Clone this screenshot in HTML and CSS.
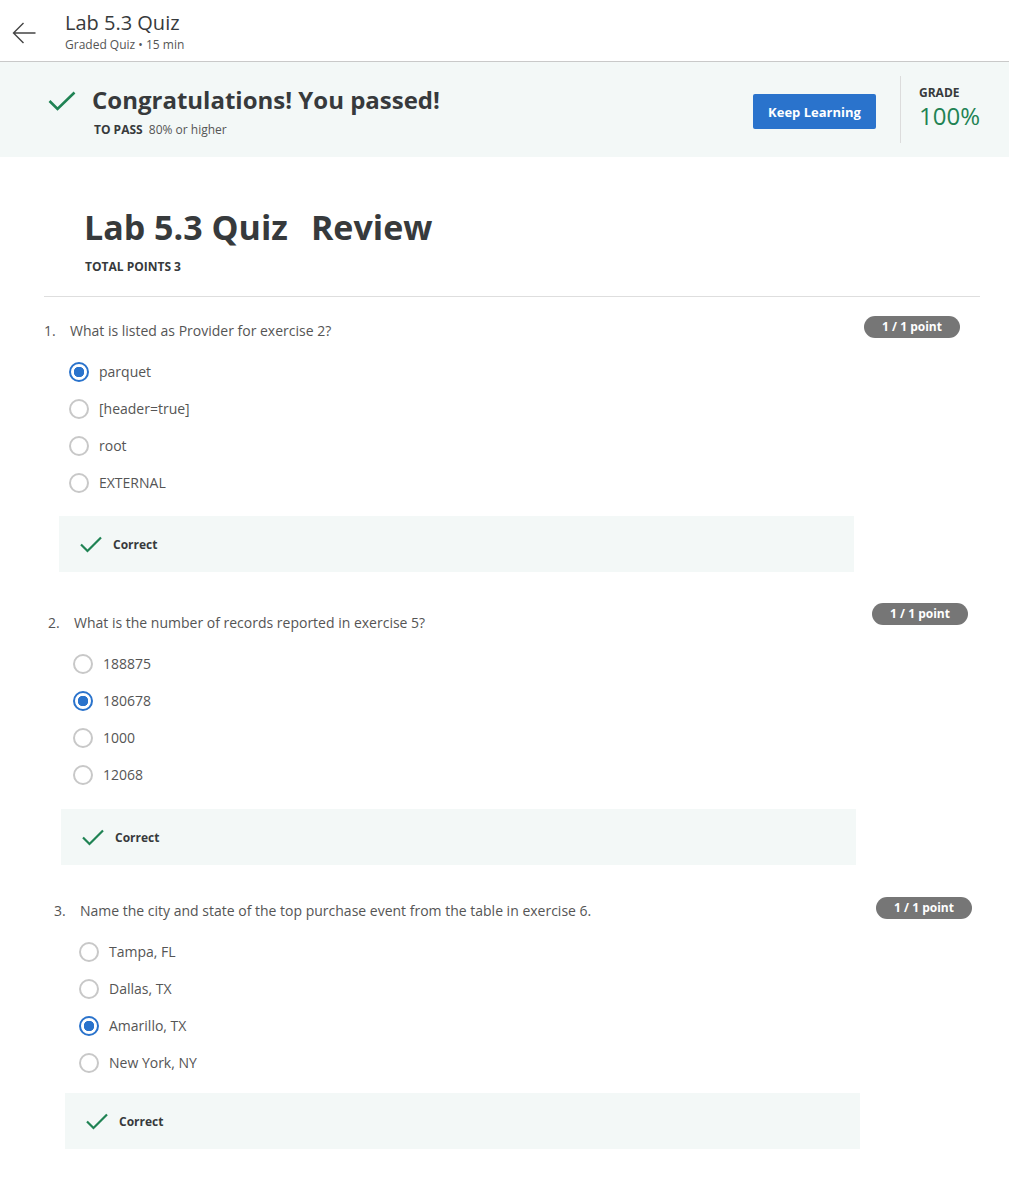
FILE: index.html
```html
<!DOCTYPE html>
<html lang="en">
<head>
<meta charset="utf-8">
<title>Lab 5.3 Quiz</title>
<link rel="stylesheet" href="styles.css">
</head>
<body>
<header class="topbar">
  <div class="back">
    <svg width="24" height="22" viewBox="0 0 24 22" aria-hidden="true"><path d="M23.5 11 H1.5 M11.5 1 L1.5 11 L11.5 21" fill="none" stroke="#444" stroke-width="1.4"/></svg>
  </div>
  <div class="topbar-titles">
    <div class="topbar-title">Lab 5.3 Quiz</div>
    <div class="topbar-sub">Graded Quiz • 15 min</div>
  </div>
</header>

<section class="banner">
  <div class="banner-left">
    <div class="banner-head">
      <svg class="banner-check" width="28" height="20" viewBox="0 0 28 20" aria-hidden="true"><polyline points="1.5,10 9.5,18 26.5,1.5" fill="none" stroke="#1f8354" stroke-width="2.6"/></svg>
      <h1 class="banner-title">Congratulations! You passed!</h1>
    </div>
    <div class="banner-sub"><span class="label">TO PASS</span> 80% or higher</div>
  </div>
  <button class="btn-primary">Keep Learning</button>
  <div class="divider"></div>
  <div class="grade">
    <div class="label">GRADE</div>
    <div class="grade-value">100%</div>
  </div>
</section>

<main class="main">
  <h2 class="page-title"><span>Lab 5.3 Quiz</span><span class="review">Review</span></h2>
  <div class="total">TOTAL POINTS 3</div>
  <hr class="rule">

  <div class="question q1">
    <div class="q-top">
      <div class="q-head"><span class="q-num">1.</span><span>What is listed as Provider for exercise 2?</span></div>
      <span class="badge">1 / 1 point</span>
    </div>
    <div class="options">
      <div class="option"><span class="radio checked"></span>parquet</div>
      <div class="option"><span class="radio"></span>[header=true]</div>
      <div class="option"><span class="radio"></span>root</div>
      <div class="option"><span class="radio"></span>EXTERNAL</div>
    </div>
    <div class="feedback">
      <svg width="22" height="17" viewBox="0 0 22 17" aria-hidden="true"><polyline points="1,8.5 7.5,15 21,1.5" fill="none" stroke="#1f8354" stroke-width="2.2"/></svg>
      <span>Correct</span>
    </div>
  </div>

  <div class="question q2">
    <div class="q-top">
      <div class="q-head"><span class="q-num">2.</span><span>What is the number of records reported in exercise 5?</span></div>
      <span class="badge">1 / 1 point</span>
    </div>
    <div class="options">
      <div class="option"><span class="radio"></span>188875</div>
      <div class="option"><span class="radio checked"></span>180678</div>
      <div class="option"><span class="radio"></span>1000</div>
      <div class="option"><span class="radio"></span>12068</div>
    </div>
    <div class="feedback">
      <svg width="22" height="17" viewBox="0 0 22 17" aria-hidden="true"><polyline points="1,8.5 7.5,15 21,1.5" fill="none" stroke="#1f8354" stroke-width="2.2"/></svg>
      <span>Correct</span>
    </div>
  </div>

  <div class="question q3">
    <div class="q-top">
      <div class="q-head"><span class="q-num">3.</span><span>Name the city and state of the top purchase event from the table in exercise 6.</span></div>
      <span class="badge">1 / 1 point</span>
    </div>
    <div class="options">
      <div class="option"><span class="radio"></span>Tampa, FL</div>
      <div class="option"><span class="radio"></span>Dallas, TX</div>
      <div class="option"><span class="radio checked"></span>Amarillo, TX</div>
      <div class="option"><span class="radio"></span>New York, NY</div>
    </div>
    <div class="feedback">
      <svg width="22" height="17" viewBox="0 0 22 17" aria-hidden="true"><polyline points="1,8.5 7.5,15 21,1.5" fill="none" stroke="#1f8354" stroke-width="2.2"/></svg>
      <span>Correct</span>
    </div>
  </div>
</main>
</body>
</html>
```

FILE: styles.css
```css
* { box-sizing: border-box; }
html, body { margin: 0; padding: 0; background: #fff; }
body {
  font-family: "Open Sans", "Noto Sans", sans-serif;
  color: #373a3c;
  width: 1009px;
}

/* top bar */
.topbar {
  display: flex;
  height: 62px;
  border-bottom: 1px solid #c9c9c9;
}
.back {
  width: 65px;
  padding: 22px 0 0 12px;
}
.back svg { display: block; }
.topbar-titles { padding-top: 11px; }
.topbar-title {
  font-size: 20px;
  line-height: 24px;
  color: #373a3c;
}
.topbar-sub {
  margin-top: 2px;
  font-size: 12px;
  line-height: 16px;
  color: #555;
}

/* banner */
.banner {
  display: flex;
  align-items: flex-start;
  height: 95px;
  background: #f3f8f7;
  padding: 0 29px 0 48px;
}
.banner-left { flex: 1; padding-top: 22px; }
.banner-head { display: flex; align-items: center; }
.banner-check { display: block; margin: 2px 16px 0 0; }
.banner-title {
  margin: 0;
  font-size: 24px;
  line-height: 32px;
  font-weight: 700;
  color: #373a3c;
}
.banner-sub {
  margin: 6px 0 0 46px;
  font-size: 12px;
  line-height: 16px;
  color: #555;
}
.label {
  font-weight: 700;
  font-size: 12px;
  color: #373a3c;
}
.banner-sub .label { margin-right: 3px; }
.btn-primary {
  margin: 32px 24px 0 0;
  width: 123px;
  height: 35px;
  border: none;
  border-radius: 2px;
  background: #2a73cc;
  color: #fff;
  font-family: inherit;
  font-size: 13px;
  font-weight: 700;
  padding: 0;
  flex: none;
}
.divider {
  margin-top: 14px;
  width: 1px;
  height: 67px;
  background: #dcdcdc;
  flex: none;
}
.grade { margin: 23px 0 0 18px; flex: none; }
.grade .label { line-height: 16px; display: block; }
.grade-value {
  font-size: 24px;
  line-height: 30px;
  color: #1f8354;
}

/* main */
.main { padding: 0 29px 40px 44px; }
.page-title {
  margin: 48px 0 0 40px;
  font-size: 34px;
  line-height: 44px;
  font-weight: 700;
  color: #373a3c;
}
.page-title .review { margin-left: 23px; }
.total {
  margin: 10px 0 0 41px;
  font-size: 12px;
  line-height: 16px;
  font-weight: 700;
  color: #373a3c;
}
.rule {
  margin: 21px 0 0;
  border: none;
  border-top: 1px solid #dedede;
}

.question { margin-top: 31px; }
.question.q1 { margin-top: 19px; }
.q-top {
  display: flex;
  justify-content: space-between;
  align-items: flex-start;
}
.q-head {
  display: flex;
  font-size: 14px;
  line-height: 20px;
  color: #555;
}
.q-num { width: 26px; }
.badge {
  width: 96px;
  height: 22px;
  border-radius: 11px;
  background: #767676;
  color: #fff;
  font-size: 12px;
  font-weight: 700;
  line-height: 22px;
  text-align: center;
  flex: none;
}
.options { margin-top: 12px; padding-left: 25px; }
.option {
  display: flex;
  align-items: center;
  height: 37px;
  font-size: 14px;
  color: #555;
}
.radio {
  width: 20px;
  height: 20px;
  border-radius: 50%;
  border: 2px solid #c8c8c8;
  margin-right: 10px;
  flex: none;
}
.radio.checked {
  border: 2.5px solid #2a73cc;
  background: radial-gradient(circle, #2a73cc 0 5px, #fff 5.5px);
}
.feedback {
  display: flex;
  align-items: center;
  width: 795px;
  height: 56px;
  margin-top: 14px;
  padding-left: 21px;
  background: #f3f8f7;
  font-size: 12px;
  font-weight: 700;
  color: #373a3c;
}
.feedback svg { display: block; margin-right: 11px; }

.q1 .q-head { margin-top: 5px; }
.q1 .badge { margin-right: 20px; }
.q1 .feedback { margin-left: 15px; margin-top: 15px; }

.q2 { margin-left: 4px; }
.q2 .q-head { margin-top: 10px; }
.q2 .badge { margin-right: 12px; }
.q2 .feedback { margin-left: 13px; margin-top: 16px; }

.q3 { margin-left: 10px; margin-top: 32px; }
.q3 .q-head { margin-top: 4px; }
.q3 .badge { margin-right: 8px; }
.q3 .feedback { margin-left: 11px; margin-top: 12px; }
```
